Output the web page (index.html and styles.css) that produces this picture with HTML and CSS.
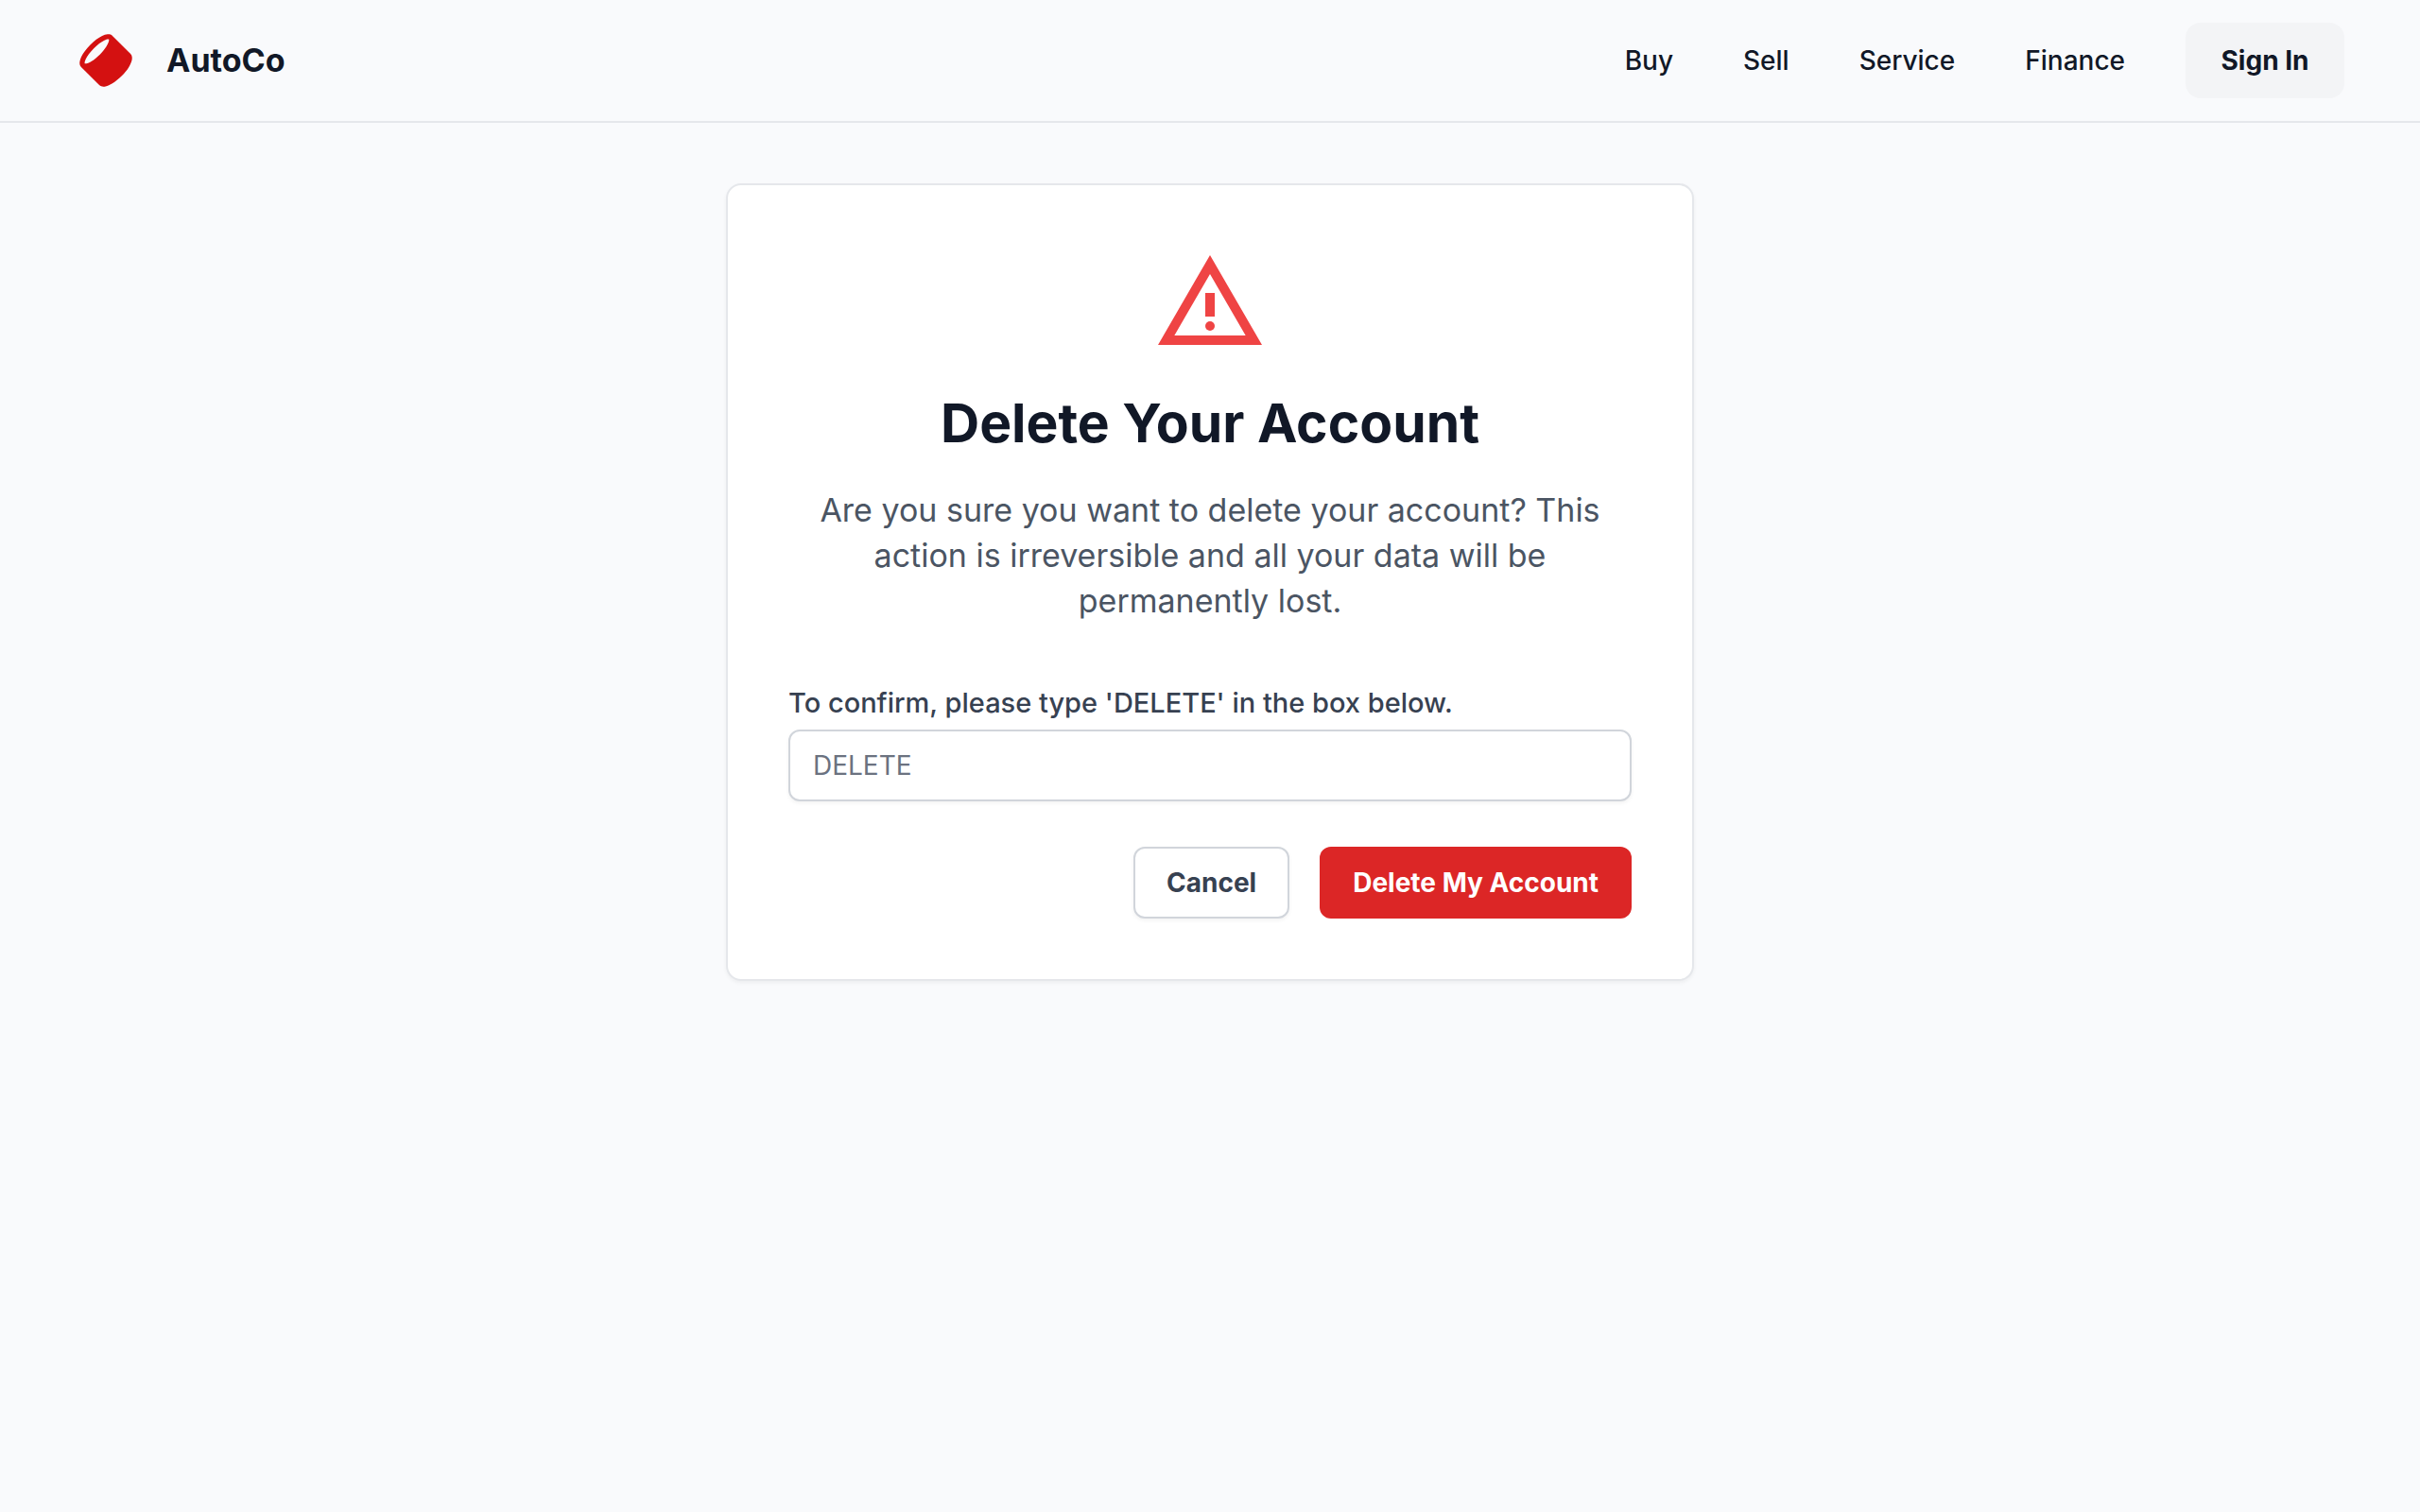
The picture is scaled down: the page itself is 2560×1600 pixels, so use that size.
FILE: index.html
```html
<!DOCTYPE html>
<html lang="en">
<head>
<meta charset="utf-8">
<meta name="viewport" content="width=device-width, initial-scale=1">
<title>AutoCo – Delete Your Account</title>
<link rel="stylesheet" href="styles.css">
</head>
<body>
<header class="header">
  <a class="brand" href="#">
    <svg class="brand-logo" viewBox="0 0 48 48" fill="currentColor" aria-hidden="true">
      <path transform="rotate(180 24 24)" fill-rule="evenodd" d="M39.475 21.6262C40.358 21.4363 40.6863 21.5589 40.7581 21.5934C40.7876 21.655 40.8547 21.857 40.8082 22.3336C40.7408 23.0255 40.4502 24.0046 39.8572 25.2301C38.6799 27.6631 36.5085 30.6631 33.5858 33.5858C30.6631 36.5085 27.6632 38.6799 25.2301 39.8572C24.0046 40.4502 23.0255 40.7407 22.3336 40.8082C21.8571 40.8547 21.6551 40.7875 21.5934 40.7581C21.5589 40.6863 21.4363 40.358 21.6262 39.475C21.8562 38.4054 22.4689 36.9657 23.5038 35.2817C24.7575 33.2417 26.5497 30.9744 28.7621 28.762C30.9744 26.5497 33.2417 24.7574 35.2817 23.5037C36.9657 22.4689 38.4054 21.8562 39.475 21.6262ZM4.41189 29.2403L18.7597 43.5881C19.8813 44.7097 21.4027 44.9179 22.7217 44.7893C24.0585 44.659 25.5148 44.1631 26.9723 43.4579C29.9052 42.0387 33.2618 39.5667 36.4142 36.4142C39.5667 33.2618 42.0387 29.9052 43.4579 26.9723C44.1631 25.5148 44.659 24.0585 44.7893 22.7217C44.9179 21.4027 44.7097 19.8813 43.5881 18.7597L29.2403 4.41187C27.8527 3.02428 25.8765 3.02573 24.2861 3.36776C22.6081 3.72863 20.7334 4.58419 18.8396 5.74801C16.4978 7.18716 13.9881 9.18353 11.5858 11.5858C9.18354 13.988 7.18717 16.4978 5.74802 18.8396C4.58421 20.7334 3.72865 22.6081 3.36778 24.2861C3.02574 25.8765 3.02429 27.8527 4.41189 29.2403Z"/>
    </svg>
    <span class="brand-name">AutoCo</span>
  </a>
  <div class="header-end">
    <nav class="nav">
      <a class="nav-link" href="#">Buy</a>
      <a class="nav-link" href="#">Sell</a>
      <a class="nav-link" href="#">Service</a>
      <a class="nav-link" href="#">Finance</a>
    </nav>
    <button class="sign-in" type="button">Sign In</button>
  </div>
</header>
<main class="main">
  <section class="card">
    <svg class="warning" viewBox="0 0 24 24" fill="currentColor" aria-hidden="true">
      <path fill-rule="evenodd" d="M12 2L1 21h22L12 2zM12 6l7.53 13H4.47L12 6z"/>
      <path d="M11 10h2v5h-2z"/>
      <circle cx="12" cy="17" r="1"/>
    </svg>
    <h1 class="title">Delete Your Account</h1>
    <p class="lead">Are you sure you want to delete your account? This action is irreversible and all your data will be permanently lost.</p>
    <form class="form">
      <label class="label" for="confirm">To confirm, please type 'DELETE' in the box below.</label>
      <input class="input" id="confirm" type="text" placeholder="DELETE">
      <div class="actions">
        <button class="button button-cancel" type="button">Cancel</button>
        <button class="button button-delete" type="submit">Delete My Account</button>
      </div>
    </form>
  </section>
</main>
</body>
</html>
```
FILE: styles.css
```css
*, *::before, *::after { box-sizing: border-box; }
body {
  margin: 0;
  min-height: 100vh;
  background: #f9fafc;
  color: #111827;
  font-family: Inter, "Noto Sans", sans-serif;
  font-size: 28px;
  line-height: 40px;
}
a { color: inherit; text-decoration: none; }
button, input { font: inherit; }
.header {
  display: flex;
  align-items: center;
  justify-content: space-between;
  padding: 24px 80px;
  border-bottom: 2px solid #e5e7eb;
}
.brand { display: flex; align-items: center; gap: 32px; }
.brand-logo { width: 64px; height: 64px; color: #d41111; }
.brand-name { font-size: 34px; font-weight: 700; }
.header-end { display: flex; align-items: center; gap: 64px; }
.nav { display: flex; gap: 74px; }
.nav-link { font-weight: 500; }
.sign-in {
  height: 80px;
  min-width: 168px;
  padding: 0 32px;
  border: 0;
  border-radius: 16px;
  background: #f3f4f6;
  color: #111827;
  font-weight: 700;
}
.main { padding: 64px 32px; }
.card {
  max-width: 1024px;
  margin: 0 auto;
  padding: 64px;
  background: #fff;
  border: 2px solid #e5e7eb;
  border-radius: 16px;
  box-shadow: 0 2px 4px rgba(0, 0, 0, 0.05);
  text-align: center;
}
.warning { display: block; width: 120px; height: 120px; margin: 0 auto; color: #ef4444; }
.title { margin: 32px 0 0; font-size: 57px; line-height: 72px; font-weight: 700; }
.lead { margin: 32px 0 0; font-size: 34px; line-height: 48px; color: #4b5563; }
.form { margin-top: 64px; text-align: left; }
.label { display: block; font-size: 29px; color: #374151; font-weight: 500; }
.input {
  display: block;
  width: 100%;
  height: 76px;
  margin-top: 8px;
  padding: 0 24px;
  border: 2px solid #d1d5db;
  border-radius: 12px;
  background: #fff;
  box-shadow: 0 2px 4px rgba(0, 0, 0, 0.05);
}
.input::placeholder { color: #6b7280; opacity: 1; }
.actions { display: flex; justify-content: flex-end; gap: 32px; margin-top: 48px; }
.button { height: 76px; min-width: 164px; padding: 0 33px; border: 2px solid transparent; border-radius: 12px; font-weight: 700; }
.button-cancel { border-color: #d1d5db; background: #fff; color: #374151; box-shadow: 0 2px 4px rgba(0, 0, 0, 0.05); }
.button-delete { background: #dc2626; color: #fff; }
```
